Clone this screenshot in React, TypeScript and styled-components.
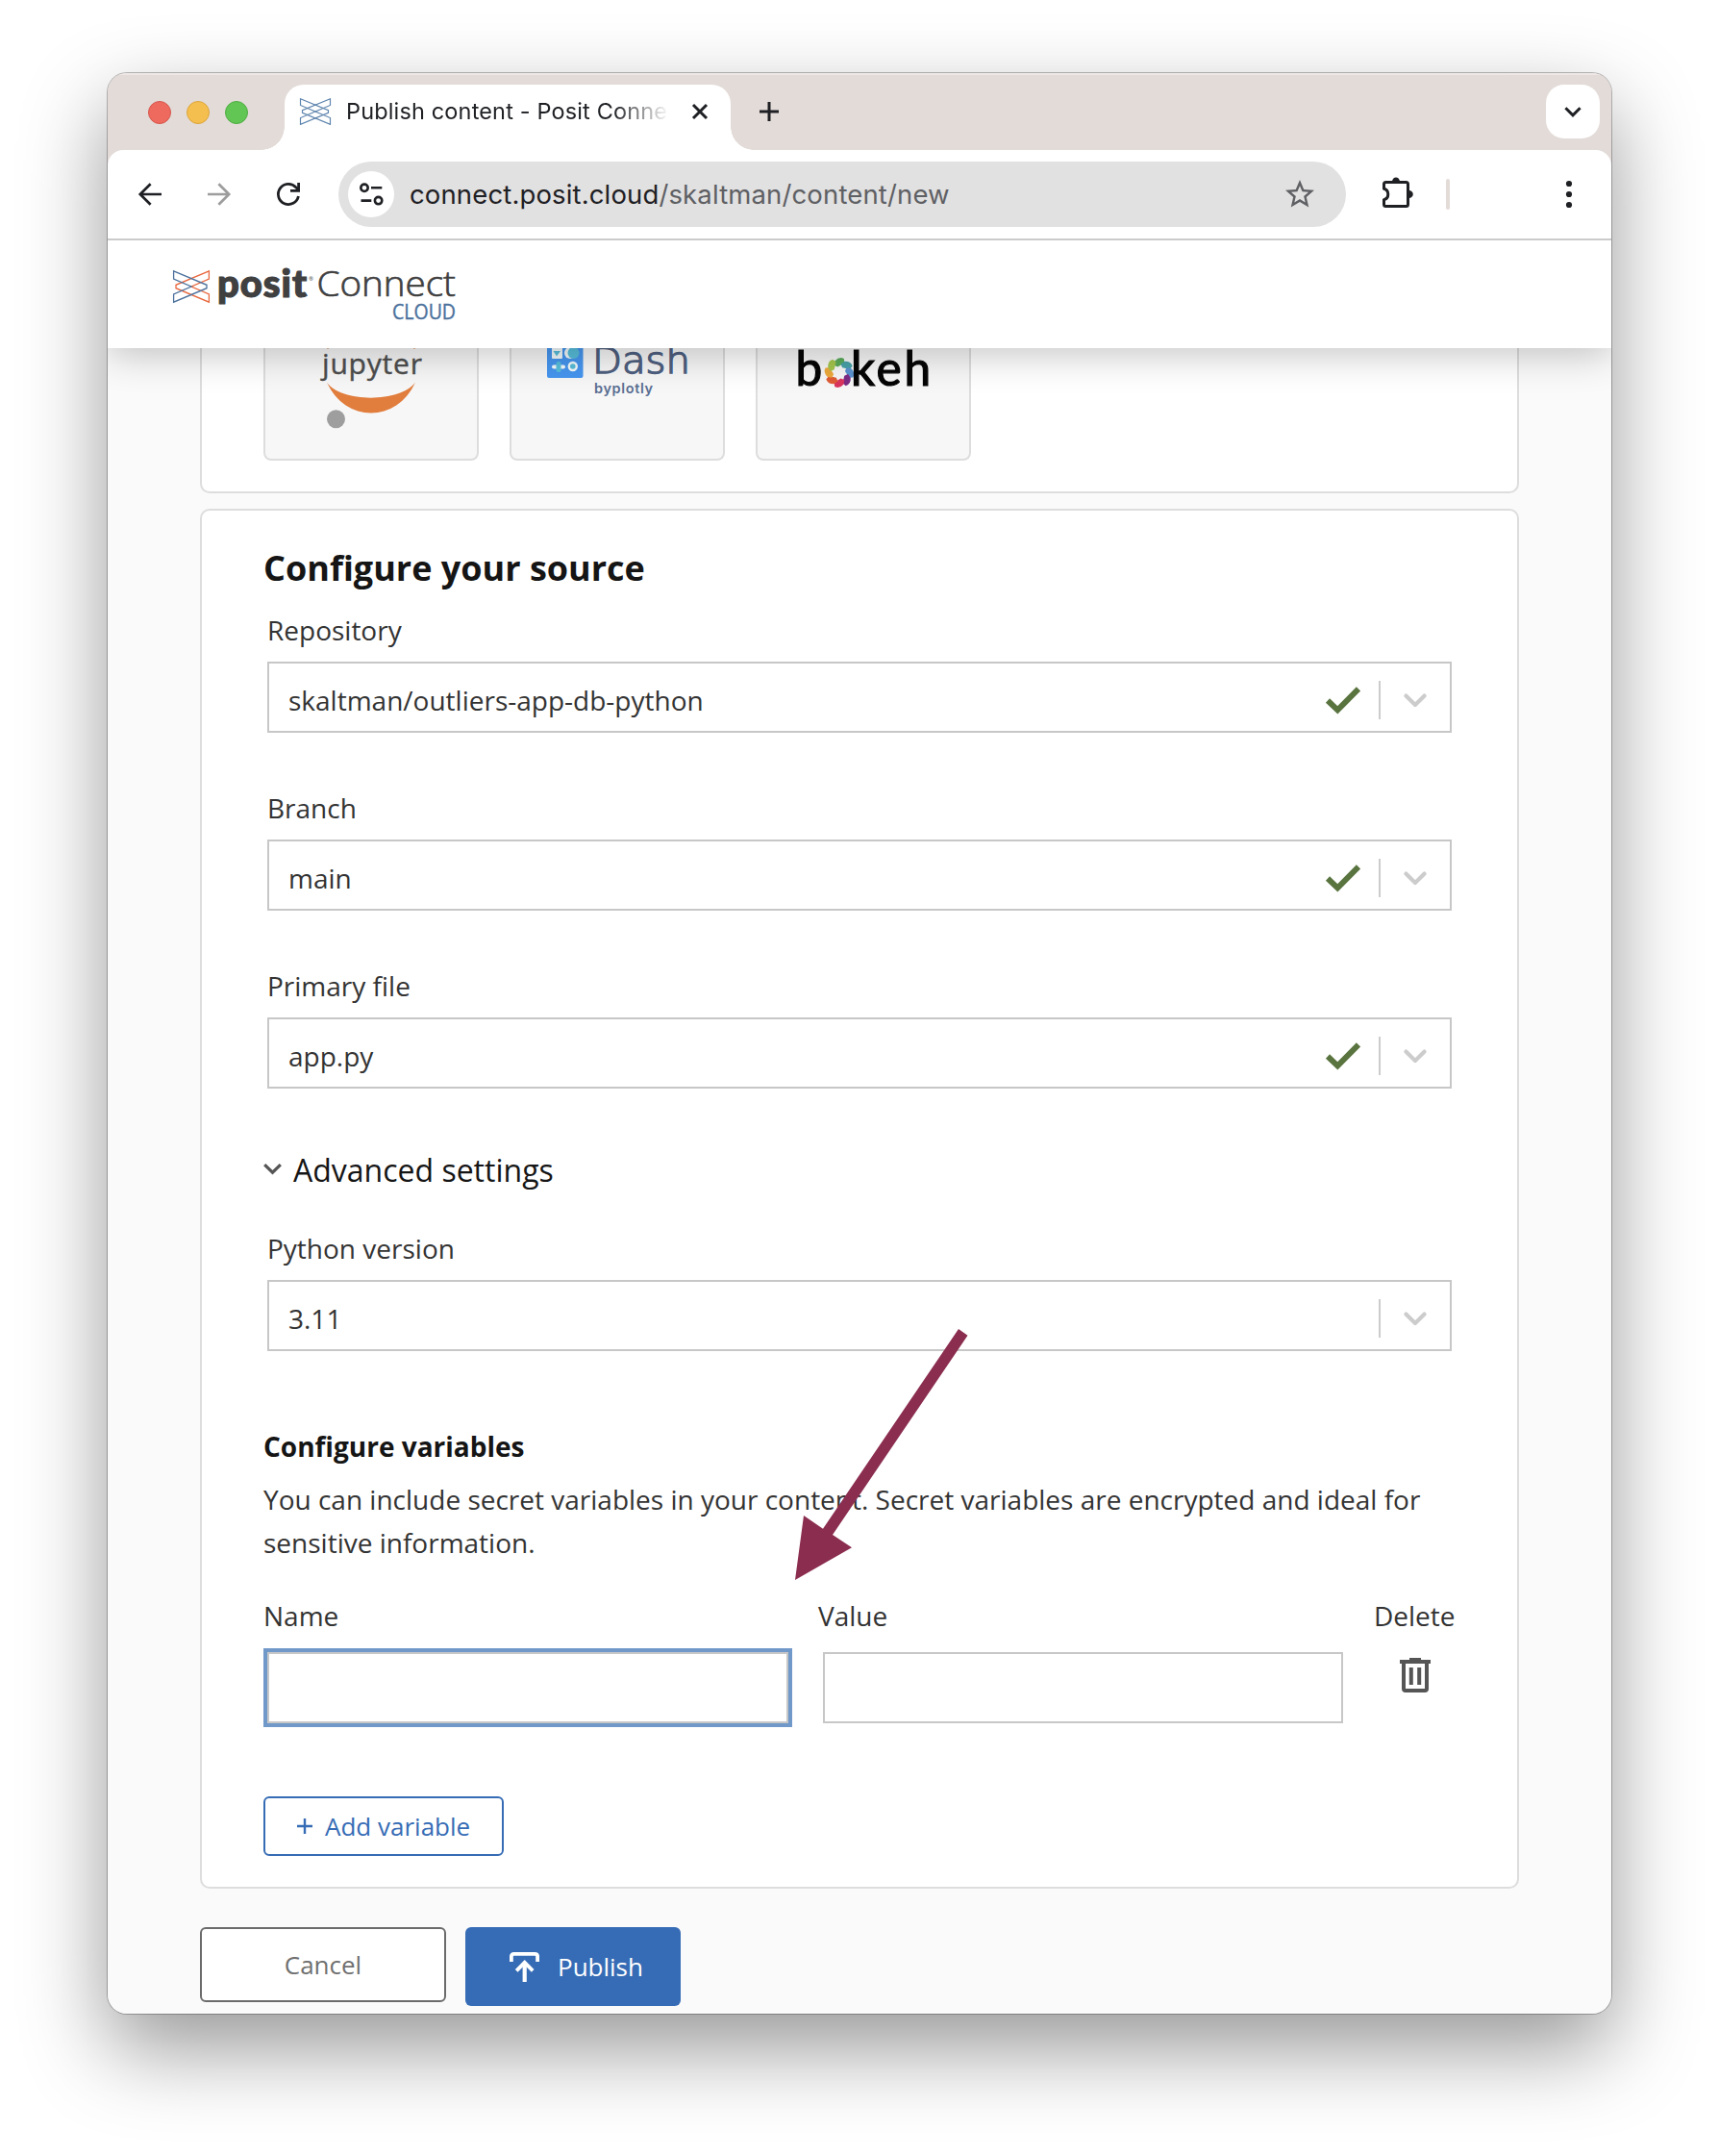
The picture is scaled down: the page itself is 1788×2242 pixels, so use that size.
import React from "react";
import styled, { createGlobalStyle, css } from "styled-components";

const GlobalStyle = createGlobalStyle`
  * { box-sizing: border-box; }
  body {
    margin: 0;
    background: #fff;
    font-family: "Open Sans", "Noto Sans", sans-serif;
  }
  svg { display: block; overflow: visible; flex: none; }
`;

const Desktop = styled.div`
  width: 1788px;
  height: 2242px;
  padding: 76px 112px 148px;
  background: #fff;
  overflow: hidden;
`;

const Window = styled.div`
  position: relative;
  display: flex;
  flex-direction: column;
  width: 1564px;
  height: 2018px;
  border-radius: 20px;
  overflow: hidden;
  background: #e3dbd8;
  box-shadow: 0 0 0 1px rgba(0, 0, 0, 0.26), 0 36px 88px rgba(0, 0, 0, 0.41);
`;

/* ---------- browser chrome ---------- */

const TabStrip = styled.div`
  display: flex;
  height: 80px;
  flex: none;
  padding: 12px 12px 0 42px;
  background: #e3dbd8;
  box-shadow: inset 0 2px 0 #ede8e6;
`;

const Lights = styled.div`
  display: flex;
  gap: 16px;
  padding-top: 17px;
  width: 142px;
`;

const Light = styled.span<{ $fill: string; $edge: string }>`
  width: 24px;
  height: 24px;
  border-radius: 50%;
  background: ${(p) => p.$fill};
  border: 1px solid ${(p) => p.$edge};
`;

const Tab = styled.div`
  position: relative;
  display: flex;
  align-items: center;
  width: 464px;
  height: 68px;
  padding: 0 24px 12px 16px;
  background: #fff;
  border-radius: 20px 20px 0 0;
  &::before,
  &::after {
    content: "";
    position: absolute;
    bottom: 0;
    width: 24px;
    height: 24px;
  }
  &::before {
    left: -24px;
    background: radial-gradient(circle at 0 0, transparent 23.5px, #fff 24px);
  }
  &::after {
    right: -24px;
    background: radial-gradient(circle at 100% 0, transparent 23.5px, #fff 24px);
  }
`;

const TabTitle = styled.span`
  width: 336px;
  margin-left: 16px;
  overflow: hidden;
  white-space: nowrap;
  font: 400 23.5px/32px Inter, sans-serif;
  letter-spacing: 0.15px;
  color: #1f2024;
  mask-image: linear-gradient(90deg, #000 278px, transparent 336px);
`;

const CloseTab = styled.span`
  margin-left: auto;
`;

const NewTab = styled.span`
  padding: 18px 0 0 30px;
`;

const TabSearch = styled.span`
  display: flex;
  align-items: center;
  justify-content: center;
  width: 56px;
  height: 56px;
  margin-left: auto;
  border-radius: 19px;
  background: #fff;
`;

const Toolbar = styled.div`
  position: relative;
  z-index: 3;
  display: flex;
  align-items: center;
  flex: none;
  height: 94px;
  padding: 0 41px 0 32px;
  background: #fff;
  border-bottom: 2px solid #cbcbcb;
  border-radius: 16px 16px 0 0;
`;

const NavButtons = styled.div`
  display: flex;
  gap: 48px;
  width: 208px;
`;

const AddressBar = styled.div`
  display: flex;
  align-items: center;
  width: 1048px;
  height: 68px;
  padding: 0 30px 0 10px;
  border-radius: 34px;
  background: #e1e1e1;
`;

const SiteInfo = styled.span`
  display: flex;
  align-items: center;
  justify-content: center;
  width: 48px;
  height: 48px;
  border-radius: 50%;
  background: #fff;
`;

const Url = styled.span`
  margin-left: 16px;
  font: 400 27.5px/40px Inter, sans-serif;
  letter-spacing: 0.14px;
  color: #5f6064;
  b {
    font-weight: 400;
    color: #1f2024;
  }
`;

const StarSlot = styled.span`
  margin-left: auto;
`;

const PuzzleSlot = styled.span`
  margin: 0 0 4px 38px;
`;

const ToolDivider = styled.span`
  width: 4px;
  height: 32px;
  margin-left: 34px;
  border-radius: 2px;
  background: #e3dbd8;
`;

const MenuSlot = styled.span`
  margin-left: auto;
`;

/* ---------- site ---------- */

const SiteHeader = styled.header`
  position: relative;
  z-index: 2;
  flex: none;
  height: 112px;
  padding: 20px 68px;
  background: #fff;
  box-shadow: 0 6px 40px rgba(0, 0, 0, 0.24);
`;

const Page = styled.main`
  flex: 1;
  min-height: 0;
  padding: 0 96px;
  background: #fafafa;
`;

const cardFrame = css`
  background: #fff;
  border: 2px solid #dddddd;
`;

const FrameworkCard = styled.section`
  ${cardFrame}
  display: flex;
  align-items: flex-start;
  gap: 32px;
  height: 151px;
  padding: 0 64px;
  border-top: 0;
  border-radius: 0 0 10px 10px;
`;

const Tile = styled.div`
  width: 224px;
  height: 117px;
  background: #f7f7f7;
  border: 2px solid #dddddd;
  border-top: 0;
  border-radius: 0 0 8px 8px;
  overflow: hidden;
`;

const SourceCard = styled.section`
  ${cardFrame}
  height: 1435px;
  margin-top: 16px;
  padding: 35px 64px 0;
  border-radius: 10px;
`;

const Title = styled.h2`
  margin: 0 0 19px;
  font-size: 36px;
  font-weight: 700;
  line-height: 50px;
  color: #151515;
`;

const Field = styled.div<{ $last?: boolean }>`
  margin: 0 4px ${(p) => (p.$last ? 0 : 58)}px;
`;

const Label = styled.label`
  display: block;
  font-size: 28px;
  line-height: 40px;
  color: #333;
`;

const Select = styled.div`
  display: flex;
  align-items: center;
  height: 74px;
  margin-top: 13px;
  padding: 6px 24px 0 20px;
  border: 2px solid #c7c7c7;
  background: #fff;
`;

const SelectValue = styled.span`
  flex: 1;
  font-size: 28px;
  line-height: 40px;
  color: #333;
`;

const SelectDivider = styled.span`
  width: 2px;
  height: 40px;
  margin: 0 24px 0 18px;
  background: #cccccc;
`;

const Disclosure = styled.div`
  display: flex;
  align-items: center;
  margin: 63px 0 39px;
  font-size: 32px;
  line-height: 44px;
  color: #151515;
  svg { margin: 0 12px 2px 0; }
`;

const Subtitle = styled.h3`
  margin: 79px 0 13px;
  font-size: 28px;
  font-weight: 700;
  line-height: 40px;
  color: #151515;
`;

const Text = styled.p`
  margin: 0 0 33px;
  font-size: 28px;
  line-height: 45px;
  color: #333;
`;

const VariableGrid = styled.div`
  display: grid;
  grid-template-columns: 550px 545px 90px;
  column-gap: 28px;
`;

const ValueLabel = styled(Label)`
  margin-left: -1px;
`;

const DeleteLabel = styled(Label)`
  padding-left: 4px;
  white-space: nowrap;
`;

const Input = styled.input<{ $focused?: boolean }>`
  display: block;
  height: 74px;
  width: ${(p) => (p.$focused ? 542 : 541)}px;
  margin: 18px 4px 0;
  padding: 0 20px;
  border: 2px solid #c7c7c7;
  border-radius: 0;
  background: #fff;
  outline: none;
  box-shadow: ${(p) => (p.$focused ? "0 0 0 4px #7098c9" : "none")};
`;

const DeleteSlot = styled.span`
  padding: 24px 0 0 31px;
`;

const Button = styled.button`
  display: flex;
  align-items: center;
  margin: 0;
  border-radius: 6px;
  font-family: inherit;
  font-size: 26px;
`;

const AddButton = styled(Button)`
  width: 250px;
  height: 62px;
  margin-top: 76px;
  padding: 0 0 0 33px;
  gap: 13px;
  border: 2px solid #366cb5;
  background: #fff;
  color: #366cb5;
  white-space: nowrap;
`;

const Actions = styled.div`
  display: flex;
  align-items: flex-start;
  gap: 20px;
  margin-top: 40px;
`;

const CancelButton = styled(Button)`
  justify-content: center;
  width: 256px;
  height: 78px;
  border: 2px solid #6b6b6b;
  background: #fff;
  color: #707070;
`;

const PublishButton = styled(Button)`
  width: 224px;
  height: 82px;
  padding: 0 0 0 46px;
  gap: 19px;
  border: 0;
  background: #366cb5;
  color: #fff;
`;

const Pointer = styled.svg`
  position: absolute;
  left: 715px;
  top: 1306px;
  z-index: 3;
  pointer-events: none;
`;

/* ---------- drawings ---------- */

function Ribbons({ w, h, left, right, sw }: { w: number; h: number; left: string; right: string; sw: number }) {
  return (
    <svg width={w} height={h} viewBox="0 0 38 34" preserveAspectRatio="none" fill="none" strokeWidth={sw}>
      <path stroke={right} d="M37.4 .8 3 15.3V18.7L37.4 33.2V25L19 17 37.4 9Z" />
      <path stroke={left} d="M.6 .8 35 15.3V18.7L.6 33.2V25L19 17 .6 9Z" />
    </svg>
  );
}

const BackIcon = ({ flip, color }: { flip?: boolean; color: string }) => (
  <svg width="24" height="24" viewBox="0 0 24 24" fill="none" stroke={color} strokeWidth="2.7">
    <path transform={flip ? "translate(24 0) scale(-1 1)" : undefined} d="M24 12H2.2M12.6 1.2 1.8 12 12.6 22.8" />
  </svg>
);

const ReloadIcon = () => (
  <svg width="24" height="24" viewBox="0 0 24 24">
    <path fill="none" stroke="#1f2024" strokeWidth="2.8" d="M22.4 14A10.6 10.6 0 1 1 19.8 4.8L22.6 7.6" />
    <path fill="none" stroke="#1f2024" strokeWidth="2.8" d="M22.6 0V8.4H14" />
  </svg>
);

const TuneIcon = () => (
  <svg width="25" height="24" viewBox="0 0 25 24" fill="none" stroke="#1f2024" strokeWidth="2.6">
    <circle cx="5" cy="5.3" r="3.7" />
    <path d="M12 5.3h11.3M1.5 18.6h10.8" />
    <circle cx="19.6" cy="18.6" r="3.7" />
  </svg>
);

const StarIcon = () => (
  <svg width="36" height="36" viewBox="0 0 24 24" fill="#5f6064">
    <path d="M22 9.24l-7.19-.62L12 2 9.19 8.63 2 9.24l5.46 4.73L5.82 21 12 17.27 18.18 21l-1.63-7.03L22 9.24zM12 15.4l-3.76 2.27 1-4.28-3.32-2.88 4.38-.38L12 6.1l1.71 4.04 4.38.38-3.32 2.88 1 4.28L12 15.4z" />
  </svg>
);

const PuzzleIcon = () => (
  <svg width="32" height="32" viewBox="0 0 32 32">
    <path
      fill="none"
      stroke="#1f2024"
      strokeWidth="3"
      strokeLinejoin="round"
      d="M1.5 12.2V7.5Q1.5 5.5 3.5 5.5H24.5Q26.5 5.5 26.5 7.5V28.5Q26.5 30.5 24.5 30.5H3.5Q1.5 30.5 1.5 28.5V23.6Q5.8 22.6 5.8 18T1.5 12.2Z"
    />
    <path fill="#1f2024" d="M10 5A4 4.6 0 0 1 18 5ZM27.5 14A4.3 4 0 0 1 27.5 22Z" />
  </svg>
);

const CheckIcon = () => (
  <svg width="37" height="29" viewBox="0 0 37 29" fill="none" stroke="#5a7440" strokeWidth="6">
    <path d="M2 14.5 12.3 24.3 34 2.4" />
  </svg>
);

const SelectChevron = () => (
  <svg width="24" height="15" viewBox="0 0 24 15" fill="none" stroke="#cccccc" strokeWidth="4.2" strokeLinecap="round" strokeLinejoin="round">
    <path d="M2.4 2.6 12 12 21.6 2.6" />
  </svg>
);

const TrashIcon = () => (
  <svg width="32" height="36" viewBox="0 0 32 36">
    <path fill="#555" d="M0 2h10V0h12v2h10v4H0Z" />
    <path fill="none" stroke="#555" strokeWidth="4" d="M4 5V32Q4 34 6 34H26Q28 34 28 32V5" />
    <path fill="none" stroke="#555" strokeWidth="4" d="M11.8 10V28M20.2 10V28" />
  </svg>
);

const PublishIcon = () => (
  <svg width="31" height="31" viewBox="0 0 31 31" fill="none" stroke="#fff" strokeWidth="3.8">
    <path d="M1.9 10V4.6Q1.9 1.9 4.6 1.9H26.4Q29.1 1.9 29.1 4.6V10" />
    <path strokeWidth="4.2" d="M15.7 31V12" />
    <path d="M7.2 19.3 15.7 10.8 24.2 19.3" />
  </svg>
);

const SiteLogo = () => (
  <svg width="300" height="64" viewBox="0 0 300 64">
    <svg x="0" y="11" width="38" height="34">
      <Ribbons w={38} h={34} left="#4b719c" right="#e8683f" sw={1.3} />
    </svg>
    <text x="46" y="38.5" fontFamily="Lato, sans-serif" fontWeight="900" fontSize="40" fill="#404041" stroke="#404041" strokeWidth="1.2" textLength="93">
      posit
    </text>
    <text x="141" y="22" fontFamily="Open Sans" fontSize="6" fill="#404041">
      ®
    </text>
    <text x="149.5" y="38" fontFamily="Open Sans" fontWeight="300" fontSize="37.5" fill="#404041" stroke="#404041" strokeWidth=".7" textLength="144.5" lengthAdjust="spacingAndGlyphs">
      Connect
    </text>
    <text x="228" y="62" fontFamily="Open Sans" fontSize="21" fill="#4b719c" stroke="#4b719c" strokeWidth=".4" textLength="66" lengthAdjust="spacingAndGlyphs">
      CLOUD
    </text>
  </svg>
);

const JupyterLogo = () => (
  <svg width="220" height="115" viewBox="276 362 220 115">
    <path fill="#e17d3d" d="M340 362h2l-1 1ZM430 362h2l-1 1Z" />
    <text x="335" y="388.5" fontFamily="Open Sans" fontSize="30" fill="#4e4e4e" stroke="#4e4e4e" strokeWidth=".4" textLength="104">
      jupyter
    </text>
    <path fill="#e17d3d" d="M340 397.5C354 419 417 419 432 397.5C413 440 359 440 340 397.5Z" />
    <circle cx="349.5" cy="435.7" r="9.5" fill="#9e9e9e" />
  </svg>
);

const DashLogo = () => (
  <svg width="220" height="115" viewBox="532 362 220 115">
    <path fill="#4696f0" d="M569 355H606.5V391Q606.5 393 604.5 393H571Q569 393 569 391Z" />
    <rect x="574" y="358" width="11" height="15" rx="1" fill="#f4fbfd" />
    <path fill="#58bfdc" d="M575.5 365H583L579 370.5Z" />
    <circle cx="593" cy="367" r="6" fill="#f4fbfd" />
    <circle cx="596.5" cy="367" r="6" fill="#58bfdc" />
    <rect x="574" y="379.5" width="14" height="4" rx="2" fill="#f4fbfd" />
    <rect x="578.5" y="376" width="5" height="11" rx="2" fill="#58bfdc" />
    <circle cx="595.8" cy="381" r="4" fill="#58bfdc" stroke="#f4fbfd" strokeWidth="2.4" />
    <text x="616" y="388" fontFamily="DejaVu Sans" fontWeight="200" fontSize="37" fill="#4f6080" stroke="#4f6080" strokeWidth="1.4" textLength="102" lengthAdjust="spacingAndGlyphs">
      Dash
    </text>
    <text x="618" y="408.5" fontFamily="Inter" fontWeight="600" fontSize="14.5" fill="#5a6e92" textLength="61">
      byplotly
    </text>
  </svg>
);

const PETALS = ["#5aaa5b", "#47a2a8", "#5b93cf", "#7c2b85", "#da345f", "#e15c35", "#eda93c", "#a4c64d"];

const BokehLogo = () => (
  <svg width="220" height="115" viewBox="788 362 220 115">
    <text x="827.5" y="400.5" fontFamily="Lato" fontSize="49.5" fill="#050505" stroke="#050505" strokeWidth="1.2">
      b
    </text>
    <g transform="translate(873 387.5) scale(1.06)">
      {PETALS.map((fill, i) => (
        <path key={fill} fill={fill} transform={`rotate(${i * 45})`} d="M-5 -7 -4.2 -11.5 Q0 -16.2 4.6 -13.6 L5 -9.6 -1.4 -5.6Z" />
      ))}
    </g>
    <text x="885" y="400.5" fontFamily="Lato" fontSize="49.5" fill="#050505" stroke="#050505" strokeWidth="1.2" textLength="83">
      keh
    </text>
  </svg>
);

/* ---------- page ---------- */

function SelectField({ label, value, valid, last }: { label: string; value: string; valid?: boolean; last?: boolean }) {
  return (
    <Field $last={last}>
      <Label>{label}</Label>
      <Select>
        <SelectValue>{value}</SelectValue>
        {valid && <CheckIcon />}
        <SelectDivider />
        <SelectChevron />
      </Select>
    </Field>
  );
}

export default function App() {
  return (
    <>
      <GlobalStyle />
      <Desktop>
        <Window>
          <TabStrip>
            <Lights>
              <Light $fill="#ee6a5f" $edge="#d5574d" />
              <Light $fill="#f5bf4f" $edge="#dba53c" />
              <Light $fill="#62c655" $edge="#4fac43" />
            </Lights>
            <Tab>
              <Ribbons w={32} h={28} left="#5d84ad" right="#5d84ad" sw={1.4} />
              <TabTitle>Publish content - Posit Connect Cloud</TabTitle>
              <CloseTab>
                <svg width="16" height="16" viewBox="0 0 16 16" stroke="#1f2024" strokeWidth="3">
                  <path d="M1 1 15 15M15 1 1 15" />
                </svg>
              </CloseTab>
            </Tab>
            <NewTab>
              <svg width="20" height="20" viewBox="0 0 20 20" stroke="#1f2024" strokeWidth="3">
                <path d="M10 0V20M0 10H20" />
              </svg>
            </NewTab>
            <TabSearch>
              <svg width="18" height="11" viewBox="0 0 18 11" fill="none" stroke="#1f2024" strokeWidth="3">
                <path d="M1.4 1.2 9 8.8 16.6 1.2" />
              </svg>
            </TabSearch>
          </TabStrip>
          <Toolbar>
            <NavButtons>
              <BackIcon color="#1f2024" />
              <BackIcon color="#9d9d9d" flip />
              <ReloadIcon />
            </NavButtons>
            <AddressBar>
              <SiteInfo>
                <TuneIcon />
              </SiteInfo>
              <Url>
                <b>connect.posit.cloud</b>/skaltman/content/new
              </Url>
              <StarSlot>
                <StarIcon />
              </StarSlot>
            </AddressBar>
            <PuzzleSlot>
              <PuzzleIcon />
            </PuzzleSlot>
            <ToolDivider />
            <MenuSlot>
              <svg width="6" height="28" viewBox="0 0 6 28" fill="#1f2024">
                <circle cx="3" cy="3" r="3.1" />
                <circle cx="3" cy="14" r="3.1" />
                <circle cx="3" cy="25" r="3.1" />
              </svg>
            </MenuSlot>
          </Toolbar>
          <SiteHeader>
            <SiteLogo />
          </SiteHeader>
          <Page>
            <FrameworkCard>
              <Tile>
                <JupyterLogo />
              </Tile>
              <Tile>
                <DashLogo />
              </Tile>
              <Tile>
                <BokehLogo />
              </Tile>
            </FrameworkCard>
            <SourceCard>
              <Title>Configure your source</Title>
              <SelectField label="Repository" value="skaltman/outliers-app-db-python" valid />
              <SelectField label="Branch" value="main" valid />
              <SelectField label="Primary file" value="app.py" valid last />
              <Disclosure>
                <svg width="19" height="12" viewBox="0 0 19 12" fill="none" stroke="#555" strokeWidth="3.2">
                  <path d="M1.2 1.2 9.5 9.2 17.8 1.2" />
                </svg>
                Advanced settings
              </Disclosure>
              <SelectField label="Python version" value="3.11" last />
              <Subtitle>Configure variables</Subtitle>
              <Text>
                You can include secret variables in your content. Secret variables are encrypted and ideal for
                sensitive information.
              </Text>
              <VariableGrid>
                <Label>Name</Label>
                <ValueLabel>Value</ValueLabel>
                <DeleteLabel>Delete</DeleteLabel>
                <Input $focused />
                <Input />
                <DeleteSlot>
                  <TrashIcon />
                </DeleteSlot>
              </VariableGrid>
              <AddButton>
                <svg width="16" height="16" viewBox="0 0 16 16" stroke="#366cb5" strokeWidth="2.4">
                  <path d="M8 0V16M0 8H16" />
                </svg>
                Add variable
              </AddButton>
            </SourceCard>
            <Actions>
              <CancelButton>Cancel</CancelButton>
              <PublishButton>
                <PublishIcon />
                Publish
              </PublishButton>
            </Actions>
          </Page>
          <Pointer width="180" height="262" viewBox="827 1382 180 262" fill="#8b2d4f">
            <path d="M997 1382 1006.5 1388.7 866 1596 886 1609.3 827 1643 836 1576 856 1589.7Z" />
          </Pointer>
        </Window>
      </Desktop>
    </>
  );
}
